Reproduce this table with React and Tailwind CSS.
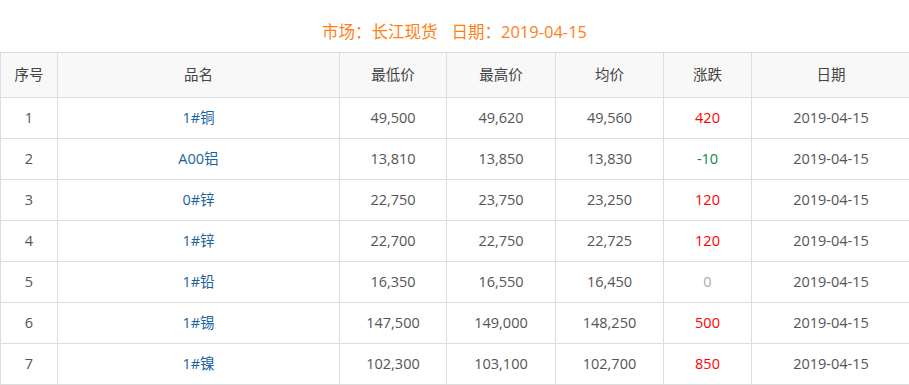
import React from 'react'

const rows = [
  ['1', '1#铜', '49,500', '49,620', '49,560', '420', '2019-04-15'],
  ['2', 'A00铝', '13,810', '13,850', '13,830', '-10', '2019-04-15'],
  ['3', '0#锌', '22,750', '23,750', '23,250', '120', '2019-04-15'],
  ['4', '1#锌', '22,700', '22,750', '22,725', '120', '2019-04-15'],
  ['5', '1#铅', '16,350', '16,550', '16,450', '0', '2019-04-15'],
  ['6', '1#锡', '147,500', '149,000', '148,250', '500', '2019-04-15'],
  ['7', '1#镍', '102,300', '103,100', '102,700', '850', '2019-04-15'],
]

const headers = ['序号', '品名', '最低价', '最高价', '均价', '涨跌', '日期']
const widths = ['w-[57px]', 'w-[282px]', 'w-[107px]', 'w-[109px]', 'w-[108px]', 'w-[88px]', 'w-[159px]']

const changeColor = (v) => {
  if (v === '0') return 'text-[#aaaaaa]'
  if (v.startsWith('-')) return 'text-[#0a8a4a]'
  return 'text-[#ff0000]'
}

const App = () => {
  return (
    <div
      className="w-[909px] overflow-hidden bg-white text-[14.5px] text-[#555]"
      style={{ fontFamily: '"Open Sans", "Noto Sans CJK SC", sans-serif' }}
    >
      <div className="h-[52px] flex items-center justify-center pt-[12px] text-[16.5px] text-[#ff7f1a]">
        <span>市场：长江现货</span>
        <span className="ml-[14px]">日期：2019-04-15</span>
      </div>
      <table className="table-fixed border-collapse w-[910px] text-center">
        <colgroup>
          {widths.map((w, i) => (
            <col key={i} className={w} />
          ))}
        </colgroup>
        <thead>
          <tr className="bg-[#f8f8f8]">
            {headers.map((h) => (
              <th key={h} className="h-[45px] border border-[#dddddd] font-normal text-[#444]">
                {h}
              </th>
            ))}
          </tr>
        </thead>
        <tbody>
          {rows.map((r) => (
            <tr key={r[0]}>
              <td className="h-[41px] border border-[#dddddd]">{r[0]}</td>
              <td className="h-[41px] border border-[#dddddd] text-[#1a63a0]">{r[1]}</td>
              <td className="h-[41px] border border-[#dddddd]">{r[2]}</td>
              <td className="h-[41px] border border-[#dddddd]">{r[3]}</td>
              <td className="h-[41px] border border-[#dddddd]">{r[4]}</td>
              <td className={`h-[41px] border border-[#dddddd] ${changeColor(r[5])}`}>{r[5]}</td>
              <td className="h-[41px] border border-[#dddddd]">{r[6]}</td>
            </tr>
          ))}
        </tbody>
      </table>
    </div>
  )
}

export default App
